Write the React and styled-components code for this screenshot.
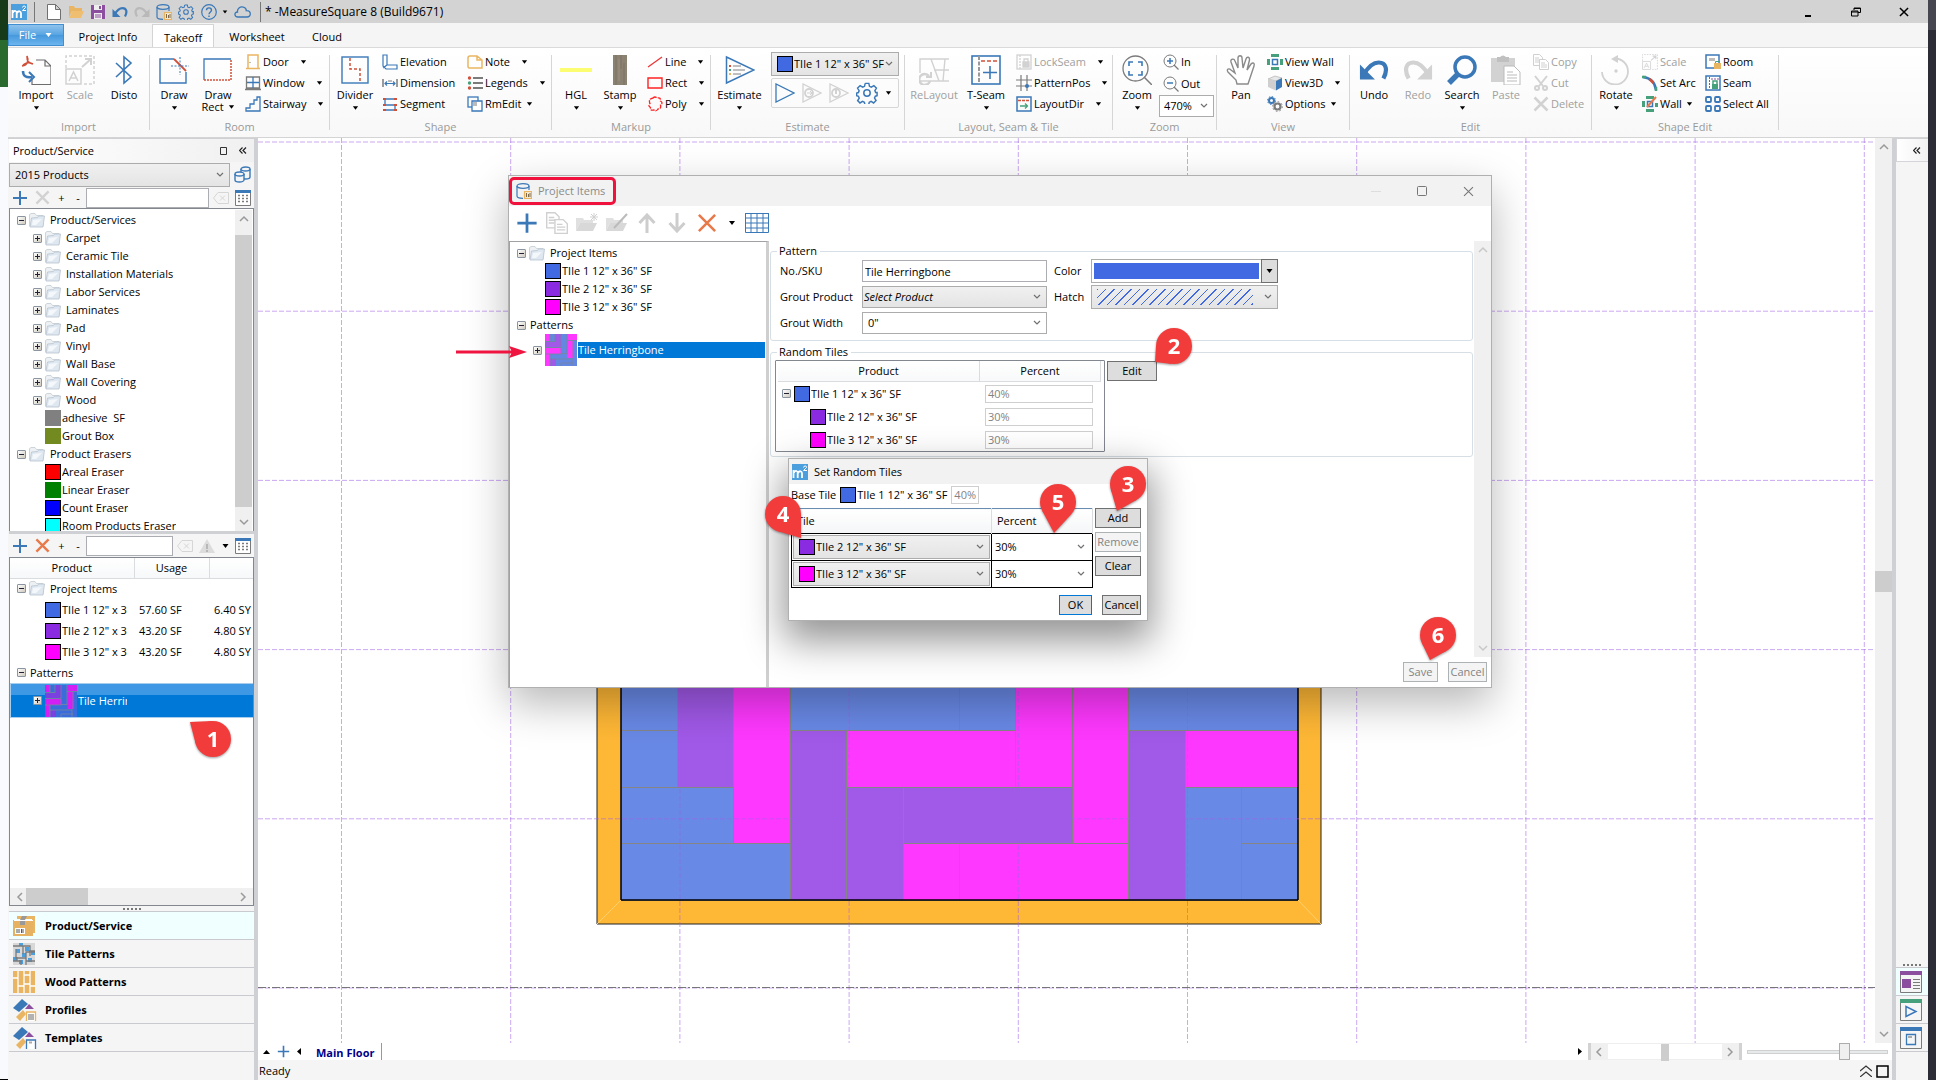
import React from 'react';
import styled, { createGlobalStyle, css } from 'styled-components';

const GlobalStyle = createGlobalStyle`
  * {
    box-sizing: border-box;
  }

  body {
    margin: 0;
    background-color: #f8fafd;
    color: #000;
    font-family: 'Open Sans', 'Noto Sans', sans-serif;
    font-size: 11px;
    line-height: 16px;
  }

  button, input, select {
    margin: 0;
    padding: 0;
    border: none;
    border-radius: 0;
    background: none;
    color: inherit;
    font: inherit;
  }

  select {
    appearance: none;
    min-width: 0;
    flex: 1;
    outline: none;
  }

  ul {
    margin: 0;
    padding: 0;
    list-style: none;
  }

  svg {
    display: block;
    flex: none;
  }
`

const blue = '#3a78b8';
const sky = '#4a9fdc';
const red = '#d0503a';
const orange = '#eab562';
const green = '#46a07c';
const purple = '#8c4fa0';
const gray = '#7b7b7b';
const pale = '#d2d2d2';

/* ---------- icons ---------- */

function Icon({ w = 16, h = w, box, stroke = 'none', sw = 1, children }) {
  return (
    <svg width={w} height={h} viewBox={box || `0 0 ${w} ${h}`} fill='none' stroke={stroke} strokeWidth={sw} aria-hidden='true'>
      {children}
    </svg>
  )
}

const Logo = () => (
  <Icon>
    <rect width='16' height='16' fill={sky} />
    <path d='M1.500 14V6M2 8.500q1-2 2.500-1.500t1.200 2V14M6 9q1-2 2.500-1.700T10 9.300V14' stroke='#fff' strokeWidth='1.800' />
    <path d='M11.500 3.500q.2-1.500 1.700-1.500t1.300 1.500L11.500 6.500h3.500' stroke='#fff' strokeWidth='1' />
  </Icon>
)

const Caret = ({ color = '#000', w = 7 }) => (
  <Icon w={w} h={4} box='0 0 8 4'><path d='M1 0h6L4 4z' fill={color} /></Icon>
)

const Chevron = ({ color = '#707070' }) => (
  <Icon w={8} h={6}><path d='M1 1l3 3 3-3' stroke={color} strokeWidth='1.200' /></Icon>
)

const arrowPaths = {
  up: 'M2 8l4-4 4 4',
  down: 'M2 4l4 4 4-4',
  left: 'M8 2L4 6l4 4',
  right: 'M4 2l4 4-4 4',
};

const ScrollArrow = ({ dir, color = '#9a9a9a' }) => (
  <Icon w={12}><path d={arrowPaths[dir]} stroke={color} strokeWidth='1.500' /></Icon>
)

const Plus = ({ s = 16, color = blue }) => (
  <Icon w={s} box='0 0 16 16'><path d='M8 1v14M1 8h14' stroke={color} strokeWidth='2' /></Icon>
)

const Cross = ({ s = 16, color = '#e8794a', sw = 2.5 }) => (
  <Icon w={s} box='0 0 16 16'><path d='M1.500 1.500l13 13M14.500 1.500l-13 13' stroke={color} strokeWidth={sw} /></Icon>
)

const FileIcon = () => (
  <Icon w={14} h={16}><path d='M.5.500h8l5 5v10H.5zM8.500.500v5h5' fill='#fff' stroke='#707070' /></Icon>
)

const OpenIcon = () => (
  <Icon w={15} h={14}>
    <path d='M0 12V1h5l1 2h7v3H3z' fill={orange} />
    <path d='M3.500 6H15l-3 7H0z' fill='#efbe70' />
  </Icon>
)

const SaveIcon = () => (
  <Icon w={14} h={14}>
    <path d='M0 0h14v14H0z' fill={purple} />
    <path d='M3 0h8v5H3z' fill='#eee' />
    <path d='M8 1h2v3H8z' fill={purple} />
    <path d='M3 8h8v6H3z' fill='#eee' />
    <path d='M4 10h6M4 12h6' stroke={purple} />
  </Icon>
)

const UndoIcon = ({ s = 16, color = blue, flip }) => (
  <Icon w={s} box='0 0 32 32'>
    <g transform={flip ? 'matrix(-1 0 0 1 32 0)' : undefined}>
      <path d='M5 21C9 14 14 8 21 8c8 0 10 8 5 17' stroke={color} strokeWidth='4.500' />
      <path d='M1 10v16h16z' fill={color} />
    </g>
  </Icon>
)

const DatabaseIcon = () => (
  <Icon>
    <ellipse cx='7' cy='3' rx='6' ry='2.300' stroke={blue} strokeWidth='1.200' />
    <path d='M1 3v10c0 1.500 3 2.300 6 2.300M13 3v4' stroke={blue} strokeWidth='1.200' />
    <path d='M8.500 8.500h7v7h-7z' fill='#f3e6cf' stroke={orange} strokeWidth='1.200' />
    <path d='M10.500 14v-4M12.500 14v-3M14 14v-4' stroke='#7d6a4a' />
  </Icon>
)

const TwoDatabasesIcon = () => (
  <Icon w={17} h={17} stroke={blue} sw={1.4}>
    <path d='M7 3v8c0 1 2 2 4.500 2s4.500-1 4.500-2V3' fill='#f5f5f5' />
    <ellipse cx='11.500' cy='3' rx='4.500' ry='2' fill='#f5f5f5' />
    <path d='M1 8v6c0 1 2 2 4.500 2s4.500-1 4.500-2V8' fill='#f5f5f5' />
    <ellipse cx='5.500' cy='8' rx='4.500' ry='2' fill='#f5f5f5' />
  </Icon>
)

const GearIcon = ({ s = 16, color = blue }) => (
  <Icon w={s} box='0 0 24 24' stroke={color} sw={1.6}>
    <circle cx='12' cy='12' r='3.500' />
    <path d='M10 1.500h4l.7 3.200 2 .9 2.800-1.700 2.800 2.800-1.700 2.700.8 2h2.400M10 1.500l-.7 3.200-2 .9-2.800-1.700-2.800 2.800 1.700 2.800-.8 2-1.900.5v3l2 .6.800 2-1.700 2.700 2.600 2.600 2.700-1.700 2 .9.700 2.700h4l.7-2.700 2-.9 2.700 1.700 2.700-2.700-1.700-2.700.9-2 1.900-.5v-3.200' />
  </Icon>
)

const HelpIcon = () => (
  <Icon>
    <circle cx='8' cy='8' r='7.300' stroke={blue} strokeWidth='1.200' />
    <path d='M5.500 6.300c0-3.300 5-3.300 5 0C10.500 8 8 8 8 10.300M8 11.500v1.500' stroke={blue} strokeWidth='1.400' />
  </Icon>
)

const CloudIcon = () => (
  <Icon w={17} h={12} stroke={blue} sw={1.3}>
    <path d='M4 11C0 11 0 6 3.500 6 3 3 6 0 9.500 1.200c2 .6 2.800 2 2.800 3.500C17.500 4.500 17.500 11 13 11z' />
  </Icon>
)

const ImportIcon = () => (
  <Icon w={30}>
    <path d='M15 5h9l6 6v18.500H11V23M24 5v6h6' stroke='#6d6d6d' strokeWidth='1.200' />
    <path d='M1 11c6-1 7-6 5-10 0 5 1 7 6 8M2 10c3-3 6-3 10-1' stroke={red} strokeWidth='1.600' />
    <path d='M2 16c0 5 3 7 9 6' stroke={blue} strokeWidth='2.500' />
    <path d='M8 17l5 5-5 5' stroke={blue} strokeWidth='2' />
  </Icon>
)

const ScaleIcon = ({ s = 30 }) => (
  <Icon w={s} box='0 0 30 30' stroke={pale} sw={1.5}>
    <path d='M1 13V1h28v28H19' strokeDasharray='3 2' />
    <path d='M1 14h15v15H1zM4 26l4.500-9L13 26M6 23h5' />
    <path d='M17 12l9-8M20 4h6v6' strokeWidth='2' />
  </Icon>
)

const BluetoothIcon = () => (
  <Icon w={30} stroke={blue} sw={1.6}>
    <path d='M7 8l15 14-7 6V2l7 6L7 22' />
  </Icon>
)

const DrawIcon = () => (
  <Icon w={30}>
    <path d='M15 4H1v24h26V17' stroke={blue} strokeWidth='1.400' />
    <path d='M15 4l12 12' stroke={red} strokeWidth='1.800' />
    <path d='M21 2v18M12 11h18' stroke={blue} strokeDasharray='2 1.500' />
  </Icon>
)

const DrawRectIcon = () => (
  <Icon w={30}>
    <path d='M1 25V4h27' stroke={blue} strokeWidth='1.300' />
    <path d='M28 5v20H1' stroke={red} strokeWidth='1.500' strokeDasharray='2 1' />
  </Icon>
)

const DoorIcon = () => (
  <Icon>
    <path d='M3 14V1h10v13M1 14.500h14' stroke={orange} strokeWidth='1.500' />
    <path d='M5 8v1' stroke={gray} />
  </Icon>
)

const WindowIcon = () => (
  <Icon>
    <path d='M1.500 2h13v11h-13zM0 14.500h16' stroke={gray} strokeWidth='1.300' />
    <path d='M8 2v11M2 7.500h12' stroke={blue} strokeWidth='1.300' />
  </Icon>
)

const StairIcon = () => (
  <Icon><path d='M1 15v-3h4V8h4V4h3V1h3v14z' stroke={blue} strokeWidth='1.300' /></Icon>
)

const DividerIcon = () => (
  <Icon w={30}>
    <rect x='2' y='2' width='26' height='26' stroke={blue} strokeWidth='1.400' />
    <path d='M10 3v11h10v14' stroke={red} strokeWidth='1.500' strokeDasharray='3 2' />
  </Icon>
)

const ElevationIcon = () => (
  <Icon><path d='M1 1h4v10h10v4H4L1 12zM1 14l4-3' stroke={blue} strokeWidth='1.200' /></Icon>
)

const DimensionIcon = () => (
  <Icon>
    <path d='M1 4v8M15 4v8' stroke={gray} strokeWidth='1.500' />
    <path d='M3 8.500h10M5 6.500l-2 2 2 2M11 6.500l2 2-2 2' stroke={blue} strokeWidth='1.200' />
    <path d='M6 6h4' stroke={gray} />
  </Icon>
)

const SegmentIcon = () => (
  <Icon>
    <path d='M2 3h12M2 9h12M2 14h12M3 3v6M13 9v5' stroke={blue} strokeWidth='1.300' />
    <path d='M1 2h3v2H1zM12 2h3v2h-3zM1 8h3v2H1zM12 8h3v2h-3zM1 13h3v2H1zM12 13h3v2h-3z' fill={red} />
  </Icon>
)

const NoteIcon = () => (
  <Icon><path d='M1 13V4q0-2 2-2h7l5 4v8H2zM10 2v4h5' stroke={orange} strokeWidth='1.500' /></Icon>
)

const LegendsIcon = () => (
  <Icon>
    <circle cx='2.500' cy='3' r='1.700' fill={red} />
    <circle cx='2.500' cy='8' r='1.700' fill={green} />
    <circle cx='2.500' cy='13' r='1.700' fill={red} />
    <path d='M6 3h10M6 8h10M6 13h10' stroke={gray} strokeWidth='2' />
  </Icon>
)

const RmEditIcon = () => (
  <Icon stroke={blue} sw={1.3}>
    <rect x='1' y='1' width='10' height='10' />
    <path d='M5 5h10v10H5z' fill='#fff' />
    <path d='M6 6h4v4H6z' fill='#bbb' stroke='none' />
  </Icon>
)

const HighlightIcon = () => (
  <Icon w={32} h={30}><path d='M0 13h32v4H0z' fill='#fdfd72' /></Icon>
)

const StampIcon = () => (
  <Icon w={14} h={30}>
    <path d='M0 0h14v30H0z' fill='#8b8272' />
    <path d='M3 0v30M8 0v14M11 8v22' stroke='#7c7364' />
    <path d='M6 4v22' stroke='#9b9283' />
  </Icon>
)

const LineIcon = () => (
  <Icon><path d='M1 13L15 3' stroke='#e33' strokeWidth='1.200' /></Icon>
)

const RectIcon = () => (
  <Icon><path d='M1 3h14v10H1z' stroke='#f22' strokeWidth='1.400' /></Icon>
)

const PolyIcon = () => (
  <Icon>
    <path d='M6 2q2-2 4 0 4-1 3.500 3 3 2 0 4 1 4-2.500 4-2 3-4 1-4 1-3.500-2.500-3-2-.5-4Q1 3 6 2z' stroke='#f22' strokeWidth='1.300' strokeDasharray='4 1' />
  </Icon>
)

const EstimateIcon = () => (
  <Icon w={30}>
    <path d='M1.500 2v26L29 15z' stroke={blue} strokeWidth='1.500' />
    <path d='M8 11h8M8 15h12M8 19h8' stroke='#aaa' strokeWidth='1.500' />
    <path d='M4 10h2v2H4z' fill={red} />
    <path d='M4 14h2v2H4z' fill={green} />
    <path d='M4 18h2v2H4z' fill={orange} />
  </Icon>
)

const PlayIcon = ({ s = 20, color = blue, dot }) => (
  <Icon w={s} box='0 0 20 20'>
    <path d='M1 1v18l18-9z' stroke={color} strokeWidth='1.300' />
    {dot && <circle cx='7' cy='10' r='4' stroke={color} strokeWidth='1.800' />}
    {dot === 'arrow' && <path d='M5 10h4M8 8l2 2-2 2' stroke={color} />}
    {dot === 'power' && <path d='M7 6v5' stroke={color} strokeWidth='2' />}
  </Icon>
)

const ReLayoutIcon = () => (
  <Icon w={30} stroke={pale} sw={1.4}>
    <path d='M1 18V4h29M12 4l8 22h10M15 15h15M1 26h26M26 4l-2 22' />
    <path d='M10 21a5.500 5.500 0 1 0 1 5' strokeWidth='2.500' />
    <path d='M12 17v5H7' strokeWidth='2' />
  </Icon>
)

const TSeamIcon = () => (
  <Icon w={30}>
    <rect x='1' y='1' width='28' height='28' stroke={blue} strokeWidth='1.600' />
    <path d='M8 1v28' stroke='#999' strokeWidth='2' strokeDasharray='4 1.500' />
    <path d='M10 6h18' stroke={red} strokeWidth='1.600' strokeDasharray='4 2' />
    <path d='M19 11v13M12 17.500h14' stroke={blue} strokeWidth='1.600' />
  </Icon>
)

const LockSeamIcon = () => (
  <Icon stroke={pale} sw={1.3}>
    <rect x='1' y='1' width='14' height='14' />
    <path d='M4 1v14' strokeDasharray='2 1' />
    <path d='M7 8h6v5H7z' fill={pale} />
    <path d='M8 8V5h4v3' />
  </Icon>
)

const PatternPosIcon = () => (
  <Icon>
    <path d='M5 0v16M11 0v16M0 5h16M0 11h16' stroke={gray} strokeWidth='1.200' />
    <circle cx='11' cy='11' r='2' fill={blue} />
  </Icon>
)

const LayoutDirIcon = () => (
  <Icon>
    <rect x='1' y='1' width='14' height='14' stroke={blue} strokeWidth='1.500' />
    <path d='M2 4.500h12' stroke={red} strokeWidth='1.500' strokeDasharray='3 1' />
    <path d='M4 10h7M9 7.500l2.500 2.500L9 12.500' stroke={green} strokeWidth='1.300' />
  </Icon>
)

const ZoomIcon = () => (
  <Icon w={30}>
    <circle cx='13.500' cy='13.500' r='12.500' stroke={gray} strokeWidth='1.300' />
    <path d='M22 22l8 8' stroke={gray} strokeWidth='1.500' />
    <path d='M7 11V7h4M16 7h4v4M20 16v4h-4M11 20H7v-4' stroke={blue} strokeWidth='1.600' />
  </Icon>
)

const LensIcon = ({ plus }) => (
  <Icon>
    <circle cx='7' cy='7' r='6' stroke={gray} />
    <path d='M11 11l4.500 4.500' stroke={gray} strokeWidth='1.300' />
    <path d={plus ? 'M7 4v6M4 7h6' : 'M4 7h6'} stroke={blue} strokeWidth='1.500' />
  </Icon>
)

const HandIcon = () => (
  <Icon w={30}>
    <path
      d='M11 29l-1-4-8-8c-2-3 1-4 3-2l4 3L5 7c-1-3 3-4 4-1l3 7V3c0-3 4-3 4 0l1 10 3-9c1-3 4-2 3.500 1L21 15l4-6c2-2 4-1 3 2l-4 12-2 6z'
      fill='#fff' stroke='#8a8a8a' strokeWidth='1.400'
    />
  </Icon>
)

const ViewWallIcon = () => (
  <Icon>
    <path d='M4 0h8v3H4zM4 13h8v3H4zM0 5h3v6H0zM13 5h3v6h-3z' fill={green} />
    <rect x='5.500' y='5.500' width='5' height='5' stroke={blue} strokeWidth='1.500' />
  </Icon>
)

const CubeIcon = () => (
  <Icon>
    <path d='M1 4l7-3 7 2-6 3z' fill='#e8e8e8' stroke='#999' strokeWidth='.5' />
    <path d='M1 4l8 2v9.500L1 12z' fill='#cfcfcf' />
    <path d='M9 6l6-3v9l-6 3.500z' fill={blue} />
  </Icon>
)

const OptionsIcon = () => (
  <Icon>
    <circle cx='4.500' cy='4.500' r='2.500' stroke={blue} strokeWidth='2' />
    <circle cx='4.500' cy='4.500' r='4' stroke={blue} strokeDasharray='1.500 1.600' />
    <circle cx='10.500' cy='10.500' r='3' stroke={gray} strokeWidth='2.200' />
    <circle cx='10.500' cy='10.500' r='4.800' stroke={gray} strokeDasharray='1.700 2' />
  </Icon>
)

const SearchIcon = () => (
  <Icon w={30}>
    <circle cx='18' cy='12' r='10' stroke={blue} strokeWidth='3.500' />
    <path d='M11 19l-9 9' stroke={blue} strokeWidth='5.500' />
  </Icon>
)

const PasteIcon = () => (
  <Icon w={30}>
    <path d='M0 3h24v24H0z' fill={pale} />
    <path d='M6 2h3q3-3 6 0h3v5H6z' fill='#c0c0c0' />
    <path d='M13 11h10l6 6v13H13z' fill='#fff' stroke='#bbb' />
    <path d='M16 17h6M16 20h10M16 23h10M16 26h10' stroke='#bbb' />
  </Icon>
)

const CopyIcon = ({ s = 16 }) => (
  <Icon w={s} box='0 0 16 16' stroke='#d0d0d0'>
    <path d='M.5.500h6l3 3v8h-9zM2 4h4M2 6h5M2 8h4' />
    <path d='M6.500 5.500h6l3 3v7h-9z' fill='#fff' />
    <path d='M8 9h4M8 11h6M8 13h6' />
  </Icon>
)

const CutIcon = () => (
  <Icon stroke={pale} sw={2}>
    <path d='M2 1l8 10M14 1L6 11' />
    <circle cx='4' cy='13' r='2' />
    <circle cx='12' cy='13' r='2' />
  </Icon>
)

const RotateIcon = () => (
  <Icon w={30} stroke={pale} sw={1.8}>
    <path d='M14 3.500a13 13 0 1 1-13 13.500' />
    <path d='M17 0v8l-7-4z' fill={pale} stroke='none' />
    <circle cx='15' cy='16' r='1.700' fill={pale} stroke='none' />
  </Icon>
)

const SetArcIcon = () => (
  <Icon>
    <path d='M1 2c8 1 12 5 13 13' stroke={blue} strokeWidth='2.500' />
    <path d='M7.500 4l4 4' stroke={red} strokeWidth='2.500' />
    <path d='M0 2h4M14 12v4' stroke={green} strokeWidth='2.500' />
  </Icon>
)

const WallIcon = () => (
  <Icon>
    <path d='M4 0h8v3H4zM4 13h8v3H4zM0 5h3v6H0zM13 7h3v4h-3z' fill={green} />
    <rect x='5.500' y='5.500' width='5' height='5' stroke={blue} strokeWidth='1.500' />
    <path d='M5 11L14 1' stroke='#e8794a' strokeWidth='2' />
  </Icon>
)

const RoomIcon = () => (
  <Icon>
    <rect x='1' y='1' width='13' height='13' fill='#fff' stroke={blue} strokeWidth='1.500' />
    <path d='M4 4h6v3H4z' fill='#bbb' />
    <path d='M9 9h7v6H9z' fill={orange} />
    <path d='M10.500 9V7.500h4V9' stroke={green} />
  </Icon>
)

const SeamIcon = () => (
  <Icon>
    <rect x='1' y='1' width='14' height='14' fill='#fff' stroke={blue} strokeWidth='1.500' />
    <path d='M4.500 2v12M6 4h8' stroke={purple} strokeDasharray='2 1' />
    <path d='M7 9h6v5H7z' fill={green} />
    <path d='M8 9V6h4v3' stroke={green} strokeWidth='1.500' />
  </Icon>
)

const SelectAllIcon = () => (
  <Icon stroke={blue} sw={1.8}>
    <rect x='1' y='1' width='5' height='5' rx='1' />
    <rect x='10' y='1' width='5' height='5' rx='1' />
    <rect x='1' y='10' width='5' height='5' rx='1' />
    <rect x='10' y='10' width='5' height='5' rx='1' />
  </Icon>
)

const ClearIcon = () => (
  <Icon w={16} h={12} stroke='#d6d6d6'>
    <path d='M5 .5h10.500v11H5L.5 6zM7 3.500l5 5M12 3.500l-5 5' />
  </Icon>
)

const CalcIcon = () => (
  <Icon>
    <path d='M.5.500h15v15H.5z' fill='#fff' stroke={gray} />
    <path d='M0 1.500h16' stroke={blue} strokeWidth='3' />
    <path d='M3 5.500h11M3 8.500h11M3 11.500h11' stroke={gray} strokeWidth='1.500' strokeDasharray='2 2' />
  </Icon>
)

const WarningIcon = () => (
  <Icon w={16} h={14}>
    <path d='M8 0l8 14H0z' fill='#dcdcdc' />
    <path d='M8 5v5M8 11v2' stroke='#aaa' strokeWidth='1.500' />
  </Icon>
)

const FolderIcon = () => (
  <Icon w={16} h={15}>
    <path d='M.5 13V1.500L2 .5h4l1.500 2H14V13z' fill='#eef1f4' stroke='#c3cbd2' strokeWidth='.8' />
    <path d='M2.500 5l6-.5 1-1.500h6l-1.500 11H1z' fill='#dfe8f1' stroke='#b7c3cf' strokeWidth='.8' />
    <path d='M4 7l9-1-6 6H3z' fill='#f4f8fb' />
  </Icon>
)

const FolderAddIcon = ({ pen }) => (
  <Icon w={22} h={20}>
    <path d='M0 18V5h7l1 2h9v3H4z' fill='#e0e0e0' />
    <path d='M4 10h17l-4 8H0z' fill='#d8d8d8' />
    {pen ? <path d='M8 15l13-14' stroke='#bbb' strokeWidth='2' /> : <path d='M18 0v8M14 4h8M15 1l6 6M21 1l-6 6' stroke='#d0d0d0' />}
  </Icon>
)

const BigArrow = ({ down }) => (
  <Icon w={18} h={20}>
    <path d={down ? 'M9 0v18M1.500 10L9 18l7.500-8' : 'M9 20V2M1.500 10L9 2l7.500 8'} stroke='#cdcdcd' strokeWidth='3' />
  </Icon>
)

const GridIcon = () => (
  <Icon w={24} h={20}>
    <path d='M.5.500h23v19H.5zM.5 5h23M.5 10h23M.5 15h23M6 .5v19M12 .5v19M18 .5v19' stroke={blue} />
    <path d='M0 0h24v1H0z' fill={blue} />
  </Icon>
)

const BoxIcon = () => (
  <Icon w={22} h={20}>
    <path d='M4 0h18v17h-3V3H4z' fill={orange} />
    <path d='M0 4h20v16H0z' fill='#e6b160' />
    <path d='M9 0h5l-2 4v5H7V4z' fill='#999' />
    <path d='M1 4.500h19' stroke='#fff' />
    <path d='M2 12h10v6H2z' fill='#fff' />
    <path d='M4 13v4M6 13v4M8.500 13v4M10 13v4' stroke='#555' />
  </Icon>
)

const TilePatternIcon = () => (
  <Icon w={22}>
    <path d='M0 0h22v22H0z' fill='#d8d8d8' />
    <path d='M6 0h4v3H6zM12 4h4v4h-4zM3 6h4v4H3zM9 10h4v4H9zM18 8h4v4h-4zM0 14h4v4H0zM6 17h4v4H6zM15 15h4v4h-4z' fill={sky} />
    <path d='M0 3h10v8M10 3h7v10M3 6v9h10V9h9M0 18h8v4M13 14v8M4 14v4M16 8h6M13 18h9' stroke={gray} strokeWidth='1.300' />
  </Icon>
)

const WoodPatternIcon = () => (
  <Icon w={22}>
    <path d='M0 0h22v22H0z' fill={orange} />
    <path d='M5 0v22M11 0v22M17 0v22M0 7h5M5 15h6M11 4h6M11 13h6M17 15h5' stroke='#fff' strokeWidth='1.300' />
  </Icon>
)

const ProfilesIcon = ({ template }) => (
  <Icon w={24} h={22}>
    <path d='M0 9L9 0l6 5-9 8z' fill={blue} />
    <path d='M16 5l5 5h-9z' fill={purple} />
    <path d='M3 18l7-7 3 4-6 7z' fill={orange} />
    <path d='M13.500 22v-9h9v9' fill='#fff' stroke={template ? blue : orange} strokeWidth='1.300' />
    {template ? <path d='M16 15.500h3' stroke='#aaa' strokeWidth='2' /> : <path d='M16 15v6M18 15v6M20 15v6' stroke='#666' />}
  </Icon>
)

const PanelIcon = ({ color, children }) => (
  <Icon w={22}>
    <path d='M.5.500h21v21H.5z' fill='#f5f5f5' stroke={gray} />
    <path d='M0 0h22v4H0z' fill={color} />
    {children}
  </Icon>
)

const HerringboneIcon = ({ dim }) => (
  <Icon w={32}>
    <path d='M0 0h32v32H0z' fill={dim ? '#3b6cdc' : '#6487e2'} />
    <path d='M0 0h5v7H0zM0 14h16v6H0zM22 0h10v6H22zM22 6h6v18h-6zM0 20h5v12H0z' fill={dim ? '#d31ef4' : '#ff38ff'} />
    <path d='M0 8h10v5H0zM10 0h6v13h-6zM5 25h6v7H5z' fill={dim ? '#7a40e0' : '#a159e8'} />
    <path d='M5 0v8M10 0v8M16 0v20M0 7.500h10M0 13.500h16M0 20h16M22 0v20M22 6.500h10M28 6v18M5 20v12M11 25h16M16 19.500h6M27 24v8M16 32v-3h12M5 25h6' stroke='#76869c' strokeWidth='.8' />
  </Icon>
)

/* ---------- window frame ---------- */

const Page = styled.div`
  display: grid;
  grid-template-columns: 8px minmax(0, 1fr) 8px;
  height: 100vh;
`

const LeftEdge = styled.div`
  background: linear-gradient(#173a19 0 40px, #2a6a2e 40px 87px, #f8fafd 87px);
  border-bottom: 1px solid #000;
`

const RightEdge = styled.div`
  background: linear-gradient(#45464f 0 30px, #2b2c36 30px);
`

const AppWindow = styled.div`
  display: flex;
  flex-direction: column;
  min-width: 0;
  background-color: #f5f5f5;
`

const TitleBar = styled.header`
  display: flex;
  align-items: center;
  height: 23px;
  background-color: #d3d3d3;
`

const QuickButton = styled.button`
  display: flex;
  align-items: center;
  justify-content: center;
  width: ${({ $w }) => $w || 22}px;
  height: 22px;
`

const Separator = styled.span`
  width: 1px;
  height: 20px;
  margin: ${({ $m }) => $m || '0'};
  background-color: #777;
`

const Title = styled.h1`
  flex: 1;
  margin: 0;
  font-size: 12px;
  font-weight: 400;
`

const TabRow = styled.nav`
  display: flex;
  align-items: stretch;
  height: 24px;
  padding-top: 1px;
`

const FileTab = styled.button`
  display: flex;
  align-items: center;
  justify-content: center;
  gap: 8px;
  width: 56px;
  height: 22px;
  border: 1px solid #3f8fd2;
  background: linear-gradient(#8fc2ec, #57a4e2 50%, #4597dd 50%, #6cb5ee);
  color: #fff;
`

const Tab = styled.button`
  width: ${({ $w }) => $w}px;
  padding-top: 3px;

  ${({ $active }) => $active && css`
    border: 1px solid #d4d4d4;
    border-bottom: none;
    background-color: #fff;
  `}
`

const Ribbon = styled.div`
  display: flex;
  height: 91px;
  padding-top: 7px;
  border-top: 1px solid #dadada;
  border-bottom: 1px solid #d4d4d4;
  background: linear-gradient(#fff, #f8f8f8);
`

const Group = styled.section`
  display: flex;
  flex-direction: column;
  width: ${({ $w }) => $w}px;
  height: 75px;
  flex: none;
  border-right: 1px solid #d6d6d6;
`

const GroupBody = styled.div`
  display: flex;
  height: 64px;
  flex: none;
  padding-left: ${({ $pad }) => $pad || 0}px;
`

const GroupName = styled.div`
  color: #999;
  text-align: center;
`

const LargeButton = styled.button`
  display: flex;
  flex-direction: column;
  align-items: center;
  width: ${({ $w }) => $w || 44}px;
  flex: none;
  color: ${({ disabled }) => disabled ? '#a0a0a0' : '#000'};
  line-height: 12px;

  span {
    display: flex;
    align-items: center;
    gap: 4px;
    white-space: nowrap;
  }

  > svg:first-child {
    margin-bottom: 4px;
  }

  > span + svg {
    margin-top: 5px;
  }
`

const SmallColumn = styled.div`
  display: flex;
  flex-direction: column;
  align-items: flex-start;
  width: ${({ $w }) => $w ? `${$w}px` : 'auto'};
  margin-left: ${({ $ml }) => $ml || 0}px;
  flex: none;
`

const SmallButton = styled.button`
  display: flex;
  align-items: center;
  gap: 2px;
  height: 22px;
  margin-top: -4px;
  margin-bottom: 4px;
  color: ${({ disabled }) => disabled ? '#a0a0a0' : '#000'};
  white-space: nowrap;

  > span + svg {
    margin-left: ${({ $gap }) => $gap || 9}px;
  }
`

function Large({ icon, label, line2, menu, w, disabled }) {
  return (
    <LargeButton $w={w} disabled={disabled}>
      {icon}
      <span>{label}</span>
      {line2 ? <span>{line2} <Caret /></span> : menu && <Caret />}
    </LargeButton>
  )
}

function Small({ icon, label, menu, gap, disabled }) {
  return (
    <SmallButton disabled={disabled} $gap={gap}>
      {icon}
      <span>{label}</span>
      {menu && <Caret />}
    </SmallButton>
  )
}

function RibbonGroup({ name, w, pad, children }) {
  return (
    <Group $w={w} aria-label={name}>
      <GroupBody $pad={pad}>{children}</GroupBody>
      <GroupName>{name}</GroupName>
    </Group>
  )
}

/* ---------- shared controls ---------- */

const Combo = styled.div`
  display: flex;
  align-items: center;
  gap: 1px;
  width: ${({ $w }) => $w ? `${$w}px` : 'auto'};
  height: ${({ $h }) => $h || 22}px;
  padding: 0 5px 0 ${({ $pl }) => $pl || 5}px;
  border: 1px solid ${({ $plain }) => $plain ? 'transparent' : '#acacac'};
  background: ${({ $white }) => $white ? '#fff' : 'linear-gradient(#f0f0f0, #e4e4e4)'};

  select {
    font-style: ${({ $italic }) => $italic ? 'italic' : 'normal'};
  }
`

const Swatch = styled.span`
  width: 16px;
  height: 16px;
  flex: none;
  border: 1px solid ${({ $edge }) => $edge || '#000'};
  background-color: ${({ $color }) => $color};
`

const TextBox = styled.input`
  min-width: 0;
  height: ${({ $h }) => $h || 20}px;
  width: ${({ $w }) => $w ? `${$w}px` : 'auto'};
  flex: ${({ $grow }) => $grow ? 1 : 'none'};
  padding: 0 2px;
  border: 1px solid ${({ disabled }) => disabled ? '#cfcfd0' : '#abadb3'};
  background-color: #fff;
  color: ${({ disabled }) => disabled ? '#838383' : '#000'};
`

const PushButton = styled.button`
  width: ${({ $w }) => $w}px;
  height: 20px;
  border: 1px solid ${({ $primary, disabled }) => $primary ? '#0078d7' : disabled ? '#adb2b5' : '#707070'};
  background-color: ${({ disabled }) => disabled ? '#f4f4f4' : '#ddd'};
  color: ${({ disabled }) => disabled ? '#838383' : '#000'};
  line-height: 16px;
`

const ToolButton = styled.button`
  display: flex;
  align-items: center;
  justify-content: center;
  width: ${({ $w }) => $w || 22}px;
  flex: none;
`

const ExpandBox = styled.button`
  display: flex;
  align-items: center;
  justify-content: center;
  width: 9px;
  height: 9px;
  flex: none;
  margin-right: 3px;
  border: 1px solid #8a95a0;
  border-radius: 1px;
  background: linear-gradient(135deg, #fff, #cfcabf);

  &::before {
    content: '';
    width: 5px;
    height: 5px;
    background:
      linear-gradient(#223, #223) center / 5px 1px no-repeat,
      linear-gradient(#223, #223) center / ${({ $open }) => $open ? '0 0' : '1px 5px'} no-repeat;
  }
`

const TreeRow = styled.div`
  display: flex;
  align-items: center;
  height: ${({ $h }) => $h || 18}px;
  padding-left: ${({ $level, $leaf }) => 7 + $level * 16 + ($leaf ? 12 : 0)}px;
  white-space: pre;
  overflow: hidden;
`

const ItemText = styled.span`
  flex: ${({ $fill }) => $fill ? '1' : '0 1 auto'};
  min-width: 0;
  margin-left: ${({ $folder }) => $folder ? 5 : 1}px;
  background-color: ${({ $selected }) => $selected ? '#0078d7' : 'transparent'};
  color: ${({ $light, $selected }) => $light || $selected ? '#fff' : '#000'};
  overflow: hidden;
`

function TreeItem({ label, level = 0, open, folder, color, edge }) {
  const leaf = Boolean(color);
  return (
    <TreeRow $level={level} $leaf={leaf}>
      {!leaf && <ExpandBox $open={open} aria-label={open ? 'Collapse' : 'Expand'} />}
      {folder && <FolderIcon />}
      {leaf && <Swatch $color={color} $edge={edge} />}
      <ItemText $folder={folder}>{label}</ItemText>
    </TreeRow>
  )
}

const ScrollBar = styled.div`
  display: flex;
  flex-direction: ${({ $row }) => $row ? 'row' : 'column'};
  align-items: center;
  justify-content: space-between;
  ${({ $row }) => $row ? 'height' : 'width'}: 17px;
  flex: none;
  padding: ${({ $row }) => $row ? '0 4px' : '3px 0'};
  background-color: #f0f0f0;
`

const Thumb = styled.span`
  width: ${({ $w }) => $w || 17}px;
  height: ${({ $h }) => $h || 17}px;
  flex: none;
  background-color: #cdcdcd;
`

const Spacer = styled.span`
  flex: ${({ $grow }) => $grow || 1};
`

/* ---------- left panel ---------- */

const Main = styled.div`
  display: flex;
  flex: 1;
  min-height: 0;
`

const SidePanel = styled.aside`
  position: relative;
  display: flex;
  flex-direction: column;
  width: 250px;
  flex: none;
  padding-left: 1px;
  border-right: 4px solid #cfd0d4;
  border-top: 1px solid #cfd0d4;
`

const PanelHeader = styled.div`
  display: flex;
  align-items: center;
  height: 23px;
  padding: 0 2px 0 4px;
  background: linear-gradient(90deg, #fff, #f0f0f0);

  h2 {
    flex: 1;
    margin: 0;
    font-size: 11px;
    font-weight: 400;
  }
`

const Chevrons = () => (
  <Icon w={8} h={7}><path d='M3.500.500l-3 3 3 3M7 .5l-3 3 3 3' stroke='#222' strokeWidth='1.200' /></Icon>
)

const ComboRow = styled.div`
  display: flex;
  align-items: center;
  gap: 2px;
  height: 25px;
  padding-right: 2px;

  > div {
    flex: 1;
  }
`

const ToolRow = styled.div`
  display: flex;
  align-items: center;
  height: 21px;
  padding-right: 1px;
`

const TreeBox = styled.div`
  display: flex;
  height: 323px;
  flex: none;
  padding: 1px 1px 0 0;
  border: 1px solid #828790;
  border-bottom: none;
  background-color: #fff;
  overflow: hidden;

  ul {
    flex: 1;
    padding-top: 1px;
    overflow: hidden;
  }
`

const Rule = styled.div`
  height: 3px;
  margin-bottom: 1px;
  background-color: #cfd0d4;
`

const UsageBox = styled.div`
  display: flex;
  flex-direction: column;
  flex: 1;
  min-height: 0;
  margin-top: 1px;
  border: 1px solid #828790;
  background-color: #fff;
  overflow: hidden;
`

const UsageTable = styled.table`
  width: 310px;
  border-collapse: collapse;
  table-layout: fixed;

  th {
    height: 20px;
    padding: 0;
    border-right: 1px solid #dadde0;
    border-bottom: 1px solid #dadde0;
    background: linear-gradient(#fff, #f6f8f9);
    font-weight: 400;
  }

  td {
    height: 21px;
    padding: 0 0 0 5px;
    white-space: nowrap;
  }

  td:first-child {
    padding: 0 7px 0 0;
  }
`

const UsageRow = styled.tr`
  ${({ $selected }) => $selected && css`
    background: linear-gradient(#3f98e3 0 12px, #0078d7 12px);
    outline: 1px solid #a9cdec;
    outline-offset: -1px;
    color: #fff;
  `}
`

const Grip = styled.div`
  display: flex;
  align-items: center;
  justify-content: center;
  gap: 2px;
  height: 5px;

  i {
    width: 2px;
    height: 2px;
    background-color: #777;
  }
`

const NavList = styled.ul`
  border-top: 1px solid #c8cad0;
`

const NavItem = styled.li`
  height: 28px;
  border-bottom: 1px solid #c8cad0;
  background-color: ${({ $active }) => $active ? '#f0ffff' : '#f5f5f5'};

  button {
    display: grid;
    grid-template-columns: 32px auto;
    align-items: center;
    width: 100%;
    height: 27px;
    padding-left: 4px;
    font-weight: 700;
    text-align: left;
  }
`

const BottomPad = styled.div`
  height: 28px;
  flex: none;
`

const folders = ['Carpet', 'Ceramic Tile', 'Installation Materials', 'Labor Services', 'Laminates', 'Pad', 'Vinyl', 'Wall Base', 'Wall Covering', 'Wood'];

const products = [
  { label: 'adhesive  SF', color: '#808080', edge: '#808080' },
  { label: 'Grout Box', color: '#728a20', edge: '#728a20' },
];

const erasers = [
  { label: 'Areal Eraser', color: '#f00' },
  { label: 'Linear Eraser', color: '#008000', edge: '#008000' },
  { label: 'Count Eraser', color: '#00f' },
  { label: 'Room Products Eraser', color: '#0ff' },
];

const tiles = [
  { name: 'TIle 1 12" x 36" SF', color: '#4169e1', usage: '57.60 SF', alt: '6.40 SY', percent: '40%' },
  { name: 'TIle 2 12" x 36" SF', color: '#8a2be2', usage: '43.20 SF', alt: '4.80 SY', percent: '30%' },
  { name: 'TIle 3 12" x 36" SF', color: '#ff00ff', usage: '43.20 SF', alt: '4.80 SY', percent: '30%' },
];

const navItems = [
  { label: 'Product/Service', icon: <BoxIcon />, active: true },
  { label: 'Tile Patterns', icon: <TilePatternIcon /> },
  { label: 'Wood Patterns', icon: <WoodPatternIcon /> },
  { label: 'Profiles', icon: <ProfilesIcon /> },
  { label: 'Templates', icon: <ProfilesIcon template /> },
];

function Dots() {
  return <Grip><i /><i /><i /><i /><i /></Grip>
}

/* numbered call-out, its point drawn from the circle's centre towards (dx, dy) */
const BadgeSvg = styled.svg`
  position: absolute;
  left: ${({ $x }) => $x - 38}px;
  top: ${({ $y }) => $y - 38}px;
  z-index: 5;
  overflow: visible;
  filter: drop-shadow(0 1px 1px rgba(0, 0, 0, 0.4));
  pointer-events: none;

  text {
    fill: #fff;
    font: 700 22px 'Open Sans', 'Noto Sans', sans-serif;
    text-anchor: middle;
  }
`

function Badge({ n, x, y, dx, dy }) {
  const r = 18;
  const angle = Math.atan2(dy, dx);
  const spread = Math.acos(r / Math.hypot(dx, dy));
  const point = (a) => `${r * Math.cos(a)},${r * Math.sin(a)}`;
  return (
    <BadgeSvg $x={x} $y={y} width='76' height='76' viewBox='-38 -38 76 76'>
      <circle r={r} fill='#f23c3c' />
      <polygon points={`${point(angle - spread)} ${dx},${dy} ${point(angle + spread)}`} fill='#f23c3c' />
      <text y='8'>{n}</text>
    </BadgeSvg>
  )
}

function ProductPanel() {
  return (
    <SidePanel>
      <PanelHeader>
        <h2>Product/Service</h2>
        <ToolButton aria-label='Float'><Icon w={7} h={8}><path d='M.5.500h6v7h-6z' stroke='#333' /></Icon></ToolButton>
        <ToolButton $w={18} aria-label='Collapse panel'><Chevrons /></ToolButton>
      </PanelHeader>
      <ComboRow>
        <Combo $h={24}>
          <select aria-label='Product list'><option>2015 Products</option></select>
          <Chevron />
        </Combo>
        <ToolButton $w={20} aria-label='Databases'><TwoDatabasesIcon /></ToolButton>
      </ComboRow>
      <ToolRow>
        <ToolButton aria-label='Add'><Plus s={16} /></ToolButton>
        <ToolButton aria-label='Delete' disabled><Cross s={15} color={pale} /></ToolButton>
        <ToolButton $w={17}>+</ToolButton>
        <ToolButton $w={16}>-</ToolButton>
        <TextBox $grow aria-label='Find product' />
        <ToolButton $w={24} aria-label='Clear'><ClearIcon /></ToolButton>
        <ToolButton $w={20} aria-label='Columns'><CalcIcon /></ToolButton>
      </ToolRow>
      <TreeBox>
        <ul>
          <li><TreeItem label='Product/Services' open folder /></li>
          {folders.map((name) => <li key={name}><TreeItem label={name} level={1} folder /></li>)}
          {products.map((item) => <li key={item.label}><TreeItem level={1} {...item} /></li>)}
          <li><TreeItem label='Product Erasers' open folder /></li>
          {erasers.map((item) => <li key={item.label}><TreeItem level={1} {...item} /></li>)}
        </ul>
        <ScrollBar>
          <ScrollArrow dir='up' />
          <Thumb $h={272} />
          <ScrollArrow dir='down' />
        </ScrollBar>
      </TreeBox>
      <Rule />
      <ToolRow>
        <ToolButton aria-label='Add item'><Plus s={16} /></ToolButton>
        <ToolButton aria-label='Delete item'><Cross s={15} /></ToolButton>
        <ToolButton $w={17}>+</ToolButton>
        <ToolButton $w={16}>-</ToolButton>
        <TextBox $grow aria-label='Find item' />
        <ToolButton $w={24} aria-label='Clear'><ClearIcon /></ToolButton>
        <ToolButton $w={20} aria-label='Warnings'><WarningIcon /></ToolButton>
        <ToolButton $w={16} aria-label='More'><Caret w={9} /></ToolButton>
        <ToolButton $w={20} aria-label='Columns'><CalcIcon /></ToolButton>
      </ToolRow>
      <UsageBox>
        <UsageTable>
          <colgroup>
            <col width='124' />
            <col width='75' />
            <col />
          </colgroup>
          <thead>
            <tr><th>Product</th><th>Usage</th><th aria-label='Alternate usage' /></tr>
          </thead>
          <tbody>
            <UsageRow><td colSpan='3'><TreeItem label='Project Items' open folder /></td></UsageRow>
            {tiles.map((tile) => (
              <UsageRow key={tile.name}>
                <td><TreeItem label={tile.name} color={tile.color} level={1} /></td>
                <td>{tile.usage}</td>
                <td>{tile.alt}</td>
              </UsageRow>
            ))}
            <UsageRow><td colSpan='3'><TreeItem label='Patterns' open /></td></UsageRow>
            <UsageRow $selected>
              <td>
                <TreeRow $level={1} $h={35}>
                  <ExpandBox aria-label='Expand' />
                  <HerringboneIcon dim />
                  <ItemText $light>Tile Herringbone</ItemText>
                </TreeRow>
              </td>
              <td />
              <td />
            </UsageRow>
          </tbody>
        </UsageTable>
        <Spacer />
        <ScrollBar $row>
          <ScrollArrow dir='left' />
          <Thumb $w={62} />
          <Spacer />
          <ScrollArrow dir='right' />
        </ScrollBar>
      </UsageBox>
      <Dots />
      <NavList>
        {navItems.map(({ label, icon, active }) => (
          <NavItem key={label} $active={active}><button>{icon}{label}</button></NavItem>
        ))}
      </NavList>
      <BottomPad />
      <Badge n='1' x={205} y={600} dx={-23} dy={-17} />
    </SidePanel>
  )
}

/* ---------- drawing area ---------- */

const Workspace = styled.main`
  position: relative;
  display: flex;
  flex-direction: column;
  flex: 1;
  min-width: 0;
`

const CanvasRow = styled.div`
  display: flex;
  flex: 1;
  min-height: 0;
  background-color: #fff;
`

const Canvas = styled.div`
  flex: 1;
  min-width: 0;
  overflow: hidden;
`

const PITCH = 169.2;
const UNIT = 56.4;

// [column, row from the bottom, columns, rows, colour]
const floor = [
  [0, 3, 1, 4, 'b'], [1, 2, 1, 5, 'p'], [2, 1, 1, 6, 'm'], [3, 3, 3, 4, 'b'], [6, 3, 1, 4, 'b'],
  [7, 2, 1, 5, 'm'], [8, 1, 1, 6, 'm'], [9, 3, 3, 4, 'b'],
  [0, 2, 1, 1, 'b'], [3, 0, 1, 3, 'p'], [4, 2, 3, 1, 'm'], [9, 0, 1, 3, 'p'], [10, 2, 2, 1, 'm'],
  [0, 1, 2, 1, 'b'], [4, 0, 1, 2, 'p'], [5, 1, 3, 1, 'p'], [10, 0, 1, 2, 'b'], [11, 1, 1, 1, 'b'],
  [0, 0, 3, 1, 'b'], [5, 0, 1, 1, 'm'], [6, 0, 3, 1, 'm'], [11, 0, 1, 1, 'b'],
];

const floorColors = { b: '#6989e6', p: '#a159e8', m: '#ff38ff' };

function Drawing() {
  const lines = [...Array(10).keys()];
  const left = 363;
  const bottom = 762;
  return (
    <svg width='100%' height='100%'>
      <path d='M339 180h724v606H339z' fill='#ffb836' stroke='#222' />
      <g stroke='#858585' shapeRendering='crispEdges'>
        {floor.map(([c, r, w, h, color]) => (
          <rect
            key={`${c}-${r}`} x={left + c * UNIT} y={bottom - (r + h) * UNIT} width={w * UNIT} height={h * UNIT}
            fill={floorColors[color]}
          />
        ))}
      </g>
      <path d='M363 180v582h677V180' fill='none' stroke='#000' strokeWidth='1.500' />
      <path d='M339 786l24-24M1063 786l-23-24' stroke='#ffcf70' />
      <g stroke='#a060e8' strokeOpacity='0.55' strokeDasharray='5 2'>
        {lines.map((i) => <line key={i} x1={83.5 + i * PITCH} x2={83.5 + i * PITCH} y1='0' y2='100%' />)}
        {lines.slice(0, 6).map((i) => <line key={i} x1='0' x2='100%' y1={4 + i * PITCH} y2={4 + i * PITCH} />)}
      </g>
      <line x1='0' x2='100%' y1='849.500' y2='849.500' stroke='#777' strokeDasharray='8 2 2 2' />
    </svg>
  )
}

const FloorBar = styled.div`
  display: flex;
  align-items: center;
  height: 17px;
  flex: none;
  background-color: #fff;
`

const FloorTab = styled.button`
  height: 17px;
  margin-left: 4px;
  padding: 3px 7px 0 6px;
  border-right: 1px solid #999;
  color: #00008b;
  font-weight: 700;
  line-height: 14px;
`

const HScroll = styled.div`
  display: flex;
  align-items: stretch;
  width: 154px;
  height: 17px;
  margin: 0 5px 0 4px;
  border: solid #d2d2d2;
  border-width: 0 3px;

  button {
    width: 17px;
    padding-left: 2px;
    background-color: #f0f0f0;
  }
`

const HTrack = styled.div`
  display: flex;
  justify-content: center;
  flex: 1;
  border: solid #eee;
  border-width: 1px 0;
`

const ZoomRange = styled.input`
  appearance: none;
  width: 141px;
  height: 17px;
  margin-right: 4px;

  &::-webkit-slider-runnable-track {
    height: 4px;
    border: 1px solid #d0d0d0;
    background-color: #e7eaea;
  }

  &::-webkit-slider-thumb {
    appearance: none;
    width: 11px;
    height: 17px;
    margin-top: -8px;
    border: 1px solid #acacac;
    background-color: #f0f0f0;
  }
`

const StatusBar = styled.footer`
  display: flex;
  align-items: center;
  justify-content: space-between;
  height: 20px;
  flex: none;
  padding: 2px 3px 0 1px;

  div {
    display: flex;
    gap: 4px;
  }
`

const RightPanel = styled.aside`
  display: flex;
  flex-direction: column;
  width: 36px;
  flex: none;
  border-left: 4px solid #cfd0d4;
  border-top: 1px solid #cfd0d4;
`

const RightHeader = styled.button`
  display: flex;
  align-items: center;
  justify-content: center;
  height: 23px;
  padding-left: 8px;
  border: 1px solid #d4d4da;
  border-width: 0 0 1px 1px;
  background: linear-gradient(90deg, #fff, #f2f2f2);
`

/* ---------- dialogs ---------- */

const Dialog = styled.section`
  position: absolute;
  left: ${({ $x }) => $x}px;
  top: ${({ $y }) => $y}px;
  display: flex;
  flex-direction: column;
  width: ${({ $w }) => $w}px;
  height: ${({ $h }) => $h}px;
  border: 1px solid #b0b0b0;
  background-color: #fff;
  box-shadow: ${({ $deep }) => $deep ? '0 16px 36px 4px rgba(0, 0, 0, 0.42)' : '0 16px 40px rgba(0, 0, 0, 0.28)'};
`

const DialogTitle = styled.div`
  display: flex;
  align-items: center;
  height: ${({ $h }) => $h}px;
  flex: none;
  padding-left: ${({ $pl }) => $pl}px;
  background-color: #f2f2f2;
  color: ${({ $dim }) => $dim ? '#8a8a8a' : '#000'};

  h2 {
    flex: 1;
    margin: 0 0 0 6px;
    font-size: 11px;
    font-weight: 400;
  }
`

const TitleMark = styled.span`
  position: absolute;
  left: 0;
  top: 1px;
  width: 107px;
  height: 28px;
  border: 3px solid #f0123c;
  border-radius: 5px;
`

const Pointer = styled.svg`
  position: absolute;
  left: -53px;
  top: 170px;
`

const DialogTools = styled.div`
  display: flex;
  align-items: center;
  height: 35px;
  flex: none;
  padding: 0 0 1px 3px;
`

const DialogBody = styled.div`
  display: flex;
  flex: 1;
  min-height: 0;
`

const DialogTree = styled.ul`
  width: 260px;
  flex: none;
  padding: 2px 1px 0 0;
  border: solid #a0a0a5;
  border-width: 1px 3px 0 1px;
  border-right-color: #cfcfcf;
`

const Pane = styled.div`
  display: flex;
  flex-direction: column;
  flex: 1;
  min-width: 0;
`

const PaneScroll = styled.div`
  display: flex;
  flex: 1;
  min-height: 0;
`

const Form = styled.div`
  flex: 1;
  min-width: 0;
  padding-top: 2px;
`

const FieldGroup = styled.fieldset`
  display: flex;
  height: ${({ $h }) => $h}px;
  min-width: 0;
  margin: 0 1px ${({ $mb }) => $mb || 0}px 1px;
  padding: 0 0 0 ${({ $pl }) => $pl}px;
  border: 1px solid #d5dfe5;
  border-radius: 3px;

  legend {
    margin-left: ${({ $pl }) => 6 - $pl}px;
    padding: 0 3px 0 2px;
  }
`

const FieldGrid = styled.div`
  display: grid;
  align-content: start;
  align-items: center;
  grid-template-columns: ${({ $cols }) => $cols};
  grid-auto-rows: ${({ $row }) => $row}px;
  row-gap: ${({ $gap }) => $gap}px;
  margin-right: 7px;
  padding-top: ${({ $pt }) => $pt || 0}px;
`

const ColorBox = styled.button`
  display: flex;
  height: 24px;
  padding: 3px 0 3px 2px;
  border: 1px solid #acacac;

  i {
    flex: 1;
    background-color: #4169e1;
  }

  span {
    display: flex;
    align-items: center;
    justify-content: center;
    width: 17px;
    margin: -4px -1px -4px 2px;
    border: 1px solid #707070;
    background-color: #ddd;
  }
`

const Hatch = styled.select`
  height: 16px;
  margin-right: 10px;
  background: repeating-linear-gradient(135deg, #4169e1 0 1px, transparent 1px 6px);
  color: transparent;
`

const RandomTable = styled.table`
  width: 330px;
  height: 92px;
  padding: 0 3px 0 2px;
  border: 1px solid #828790;
  border-radius: 1px;
  border-spacing: 0;
  table-layout: fixed;

  th {
    height: 21px;
    padding: 0;
    border-right: 1px solid #dadde0;
    border-bottom: 1px solid #dadde0;
    background: linear-gradient(#fff, #f8f9fa);
    font-weight: 400;
  }

  td {
    padding: 0 0 0 5px;
    height: 23px;
  }

  td:first-child {
    padding: 0;
  }

  input {
    display: block;
  }
`

const RandomItem = styled.div`
  display: flex;
  align-items: center;
  padding-left: ${({ $child }) => $child ? 32 : 4}px;
`

const EditSlot = styled.div`
  padding: 1px 0 0 2px;
`

const DialogFooter = styled.div`
  display: flex;
  align-items: center;
  justify-content: flex-end;
  gap: 10px;
  height: 30px;
  padding-right: 4px;
`

const BaseRow = styled.div`
  display: flex;
  align-items: center;
  height: 24px;
  padding: 0 0 3px 2px;

  label {
    margin-right: 4px;
  }

  span + span {
    margin: 0 4px 0 1px;
  }
`

const SetBody = styled.div`
  display: flex;
  gap: 2px;
  padding-left: 2px;
`

const SetTable = styled.table`
  width: 301px;
  height: 80px;
  border: 1px solid #688caf;
  border-collapse: collapse;
  table-layout: fixed;

  th {
    height: 25px;
    padding: 0 0 0 5px;
    border-right: 1px solid #dadde0;
    background: linear-gradient(#fff, #f4f6f7);
    font-weight: 400;
    text-align: left;
  }

  td {
    height: 27px;
    padding: 1px;
    border: 1px solid #000;
  }

  td:last-child {
    padding-left: 0;
  }
`

const ButtonColumn = styled.div`
  display: flex;
  flex-direction: column;
  gap: 4px;
`

const SetFooter = styled.div`
  display: flex;
  justify-content: flex-end;
  gap: 10px;
  margin-top: 7px;
  padding-right: 6px;
`

function SetRandomTiles() {
  return (
    <Dialog $x={279} $y={282} $w={360} $h={163} $deep aria-label='Set Random Tiles'>
      <DialogTitle $h={25} $pl={3}>
        <Logo />
        <h2>Set Random Tiles</h2>
      </DialogTitle>
      <BaseRow>
        <label htmlFor='base-percent'>Base Tile</label>
        <Swatch $color={tiles[0].color} />
        <span>{tiles[0].name}</span>
        <TextBox id='base-percent' $w={28} $h={18} disabled defaultValue='40%' />
      </BaseRow>
      <SetBody>
        <SetTable>
          <colgroup>
            <col width='200' />
            <col width='101' />
          </colgroup>
          <thead>
            <tr><th>Tile</th><th>Percent</th></tr>
          </thead>
          <tbody>
            {tiles.slice(1).map((tile) => (
              <tr key={tile.name}>
                <td>
                  <Combo $h={24}>
                    <Swatch $color={tile.color} />
                    <select aria-label='Tile'><option>{tile.name}</option></select>
                    <Chevron />
                  </Combo>
                </td>
                <td>
                  <Combo $h={24} $white $plain $pl={2}>
                    <select aria-label='Percent'><option>{tile.percent}</option></select>
                    <Chevron />
                  </Combo>
                </td>
              </tr>
            ))}
          </tbody>
        </SetTable>
        <ButtonColumn>
          <PushButton $w={46}>Add</PushButton>
          <PushButton $w={46} disabled>Remove</PushButton>
          <PushButton $w={46}>Clear</PushButton>
        </ButtonColumn>
      </SetBody>
      <SetFooter>
        <PushButton $w={33} $primary>OK</PushButton>
        <PushButton $w={39}>Cancel</PushButton>
      </SetFooter>
      <Badge n='3' x={339} y={25} dx={-11} dy={27} />
      <Badge n='4' x={-6} y={55} dx={18} dy={24} />
      <Badge n='5' x={269} y={43} dx={-4} dy={31} />
    </Dialog>
  )
}

function ProjectItems() {
  return (
    <Dialog $x={250} $y={37} $w={984} $h={513} aria-label='Project Items'>
      <DialogTitle $h={30} $pl={7} $dim>
        <DatabaseIcon />
        <h2>Project Items</h2>
        <ToolButton $w={46} aria-label='Minimize' disabled><Icon w={10}><path d='M0 5.500h10' stroke='#ddd' /></Icon></ToolButton>
        <ToolButton $w={46} aria-label='Maximize'><Icon w={10}><rect x='.5' y='.5' width='9' height='9' rx='1' stroke='#777' /></Icon></ToolButton>
        <ToolButton $w={46} aria-label='Close'><Cross s={11} color='#777' sw={1.6} /></ToolButton>
      </DialogTitle>
      <DialogTools>
        <ToolButton $w={30} aria-label='Add'><Plus s={22} /></ToolButton>
        <ToolButton $w={30} aria-label='Copy' disabled><CopyIcon s={22} /></ToolButton>
        <ToolButton $w={30} aria-label='New folder' disabled><FolderAddIcon /></ToolButton>
        <ToolButton $w={30} aria-label='Rename' disabled><FolderAddIcon pen /></ToolButton>
        <ToolButton $w={30} aria-label='Move up' disabled><BigArrow /></ToolButton>
        <ToolButton $w={30} aria-label='Move down' disabled><BigArrow down /></ToolButton>
        <ToolButton $w={30} aria-label='Delete'><Cross s={20} sw={2} /></ToolButton>
        <ToolButton $w={20} aria-label='Delete options'><Caret w={10} /></ToolButton>
        <ToolButton $w={30} aria-label='Grid'><GridIcon /></ToolButton>
      </DialogTools>
      <DialogBody>
        <DialogTree>
          <li><TreeItem label='Project Items' open folder /></li>
          {tiles.map((tile) => <li key={tile.name}><TreeItem label={tile.name} color={tile.color} level={1} /></li>)}
          <li><TreeItem label='Patterns' open /></li>
          <li>
            <TreeRow $level={1} $h={32}>
              <ExpandBox aria-label='Expand' />
              <HerringboneIcon />
              <ItemText $fill $selected>Tile Herringbone</ItemText>
            </TreeRow>
          </li>
        </DialogTree>
        <Pane>
          <PaneScroll>
            <Form>
              <FieldGroup $h={98} $mb={3} $pl={9}>
                <legend>Pattern</legend>
                <FieldGrid $cols='82px 185px' $row={22} $gap={4} $pt={1}>
                  <label htmlFor='sku'>No./SKU</label>
                  <TextBox id='sku' $h={22} defaultValue='Tile Herringbone' />
                  <label htmlFor='grout-product'>Grout Product</label>
                  <Combo $italic $pl={1}>
                    <select id='grout-product'><option>Select Product</option></select>
                    <Chevron />
                  </Combo>
                  <label htmlFor='grout-width'>Grout Width</label>
                  <Combo $white>
                    <select id='grout-width'><option>0"</option></select>
                    <Chevron />
                  </Combo>
                </FieldGrid>
                <FieldGrid $cols='37px 187px' $row={24} $gap={2}>
                  <label htmlFor='color'>Color</label>
                  <ColorBox id='color' aria-label='Royal blue'><i /><span><Caret w={9} /></span></ColorBox>
                  <label htmlFor='hatch'>Hatch</label>
                  <Combo $h={24}>
                    <Hatch id='hatch'><option>Diagonal</option></Hatch>
                    <Chevron />
                  </Combo>
                </FieldGrid>
              </FieldGroup>
              <FieldGroup $h={113} $pl={4}>
                <legend>Random Tiles</legend>
                <RandomTable>
                  <colgroup>
                    <col width='202' />
                    <col />
                  </colgroup>
                  <thead>
                    <tr><th>Product</th><th>Percent</th></tr>
                  </thead>
                  <tbody>
                    {tiles.map((tile, i) => (
                      <tr key={tile.name}>
                        <td>
                          <RandomItem $child={i > 0}>
                            {i === 0 && <ExpandBox $open aria-label='Collapse' />}
                            <Swatch $color={tile.color} />
                            <ItemText>{tile.name}</ItemText>
                          </RandomItem>
                        </td>
                        <td><TextBox $w={108} $h={18} disabled defaultValue={tile.percent} aria-label={`${tile.name} percent`} /></td>
                      </tr>
                    ))}
                  </tbody>
                </RandomTable>
                <EditSlot><PushButton $w={50}>Edit</PushButton></EditSlot>
              </FieldGroup>
            </Form>
            <ScrollBar>
              <ScrollArrow dir='up' color='#c8c8c8' />
              <ScrollArrow dir='down' color='#c8c8c8' />
            </ScrollBar>
          </PaneScroll>
          <DialogFooter>
            <PushButton $w={35} disabled>Save</PushButton>
            <PushButton $w={39} disabled>Cancel</PushButton>
          </DialogFooter>
        </Pane>
      </DialogBody>
      <TitleMark />
      <Pointer width='72' height='12' aria-hidden='true'>
        <path d='M0 6h58' stroke='#ef1540' strokeWidth='3' />
        <path d='M53 0l18 6-18 6 3-6z' fill='#ef1540' />
      </Pointer>
      <SetRandomTiles />
      <Badge n='2' x={665} y={170} dx={-19} dy={16} />
      <Badge n='6' x={929} y={459} dx={-8} dy={25} />
    </Dialog>
  )
}

/* ---------- ribbon content ---------- */

const EstimateStack = styled.div`
  display: flex;
  flex-direction: column;
  gap: 2px;
  width: 128px;
  margin: -3px 0 0 8px;
`

const PlayBar = styled.div`
  display: flex;
  align-items: center;
  height: 30px;
  padding-left: 3px;
  gap: 7px;
  border: 1px solid #d6d6d6;
  border-radius: 2px;
`

const SmallRow = styled.div`
  display: flex;
  padding-left: 4px;
`

const ZoomCombo = styled(Combo)`
  margin-top: -4px;
`

function RibbonBar() {
  return (
    <Ribbon>
      <RibbonGroup name='Import' w={142} pad={6}>
        <Large icon={<ImportIcon />} label='Import' menu />
        <Large icon={<ScaleIcon />} label='Scale' disabled />
        <Large icon={<BluetoothIcon />} label='Disto' />
      </RibbonGroup>
      <RibbonGroup name='Room' w={180} pad={2}>
        <Large icon={<DrawIcon />} label='Draw' menu />
        <Large icon={<DrawRectIcon />} label='Draw' line2='Rect' />
        <SmallColumn $ml={5}>
          <Small icon={<DoorIcon />} label='Door' menu />
          <Small icon={<WindowIcon />} label='Window' menu />
          <Small icon={<StairIcon />} label='Stairway' menu />
        </SmallColumn>
      </RibbonGroup>
      <RibbonGroup name='Shape' w={222} pad={3}>
        <Large icon={<DividerIcon />} label='Divider' menu />
        <SmallColumn $ml={5} $w={85}>
          <Small icon={<ElevationIcon />} label='Elevation' />
          <Small icon={<DimensionIcon />} label='Dimension' />
          <Small icon={<SegmentIcon />} label='Segment' />
        </SmallColumn>
        <SmallColumn>
          <Small icon={<NoteIcon />} label='Note' menu />
          <Small icon={<LegendsIcon />} label='Legends' menu />
          <Small icon={<RmEditIcon />} label='RmEdit' menu gap={2} />
        </SmallColumn>
      </RibbonGroup>
      <RibbonGroup name='Markup' w={159} pad={2}>
        <Large icon={<HighlightIcon />} label='HGL' menu />
        <Large icon={<StampIcon />} label='Stamp' menu />
        <SmallColumn $ml={5}>
          <Small icon={<LineIcon />} label='Line' menu />
          <Small icon={<RectIcon />} label='Rect' menu />
          <Small icon={<PolyIcon />} label='Poly' menu />
        </SmallColumn>
      </RibbonGroup>
      <RibbonGroup name='Estimate' w={194} pad={5}>
        <Large icon={<EstimateIcon />} label='Estimate' menu w={47} />
        <EstimateStack>
          <Combo $h={24}>
            <Swatch $color='#4169e1' />
            <select aria-label='Current product'><option>{'TIle 1 12" x 36" SF'}</option></select>
            <Chevron />
          </Combo>
          <PlayBar>
            <ToolButton $w={20} aria-label='Run'><PlayIcon /></ToolButton>
            <ToolButton $w={20} aria-label='Run next' disabled><PlayIcon color={pale} dot='arrow' /></ToolButton>
            <ToolButton $w={20} aria-label='Auto run' disabled><PlayIcon color={pale} dot='power' /></ToolButton>
            <ToolButton aria-label='Settings'><GearIcon s={22} /></ToolButton>
            <Caret />
          </PlayBar>
        </EstimateStack>
      </RibbonGroup>
      <RibbonGroup name='Layout, Seam & Tile' w={208} pad={2}>
        <Large icon={<ReLayoutIcon />} label='ReLayout' w={54} disabled />
        <Large icon={<TSeamIcon />} label='T-Seam' menu w={50} />
        <SmallColumn $ml={5}>
          <Small icon={<LockSeamIcon />} label='LockSeam' menu disabled />
          <Small icon={<PatternPosIcon />} label='PatternPos' menu />
          <Small icon={<LayoutDirIcon />} label='LayoutDir' menu />
        </SmallColumn>
      </RibbonGroup>
      <RibbonGroup name='Zoom' w={104} pad={2}>
        <Large icon={<ZoomIcon />} label='Zoom' menu />
        <SmallColumn>
          <SmallRow><Small icon={<LensIcon plus />} label='In' /></SmallRow>
          <SmallRow><Small icon={<LensIcon />} label='Out' /></SmallRow>
          <ZoomCombo $w={55} $h={22} $white $pl={4}>
            <select aria-label='Zoom level'><option>470%</option></select>
            <Chevron />
          </ZoomCombo>
        </SmallColumn>
      </RibbonGroup>
      <RibbonGroup name='View' w={133} pad={2}>
        <Large icon={<HandIcon />} label='Pan' />
        <SmallColumn $ml={4}>
          <Small icon={<ViewWallIcon />} label='View Wall' />
          <Small icon={<CubeIcon />} label='View3D' menu />
          <Small icon={<OptionsIcon />} label='Options' menu gap={2} />
        </SmallColumn>
      </RibbonGroup>
      <RibbonGroup name='Edit' w={242} pad={2}>
        <Large icon={<UndoIcon s={30} />} label='Undo' />
        <Large icon={<UndoIcon s={30} color={pale} flip />} label='Redo' disabled />
        <Large icon={<SearchIcon />} label='Search' menu />
        <Large icon={<PasteIcon />} label='Paste' disabled />
        <SmallColumn $ml={5}>
          <Small icon={<CopyIcon />} label='Copy' disabled />
          <Small icon={<CutIcon />} label='Cut' disabled />
          <Small icon={<Cross color={pale} />} label='Delete' disabled />
        </SmallColumn>
      </RibbonGroup>
      <RibbonGroup name='Shape Edit' w={187} pad={2}>
        <Large icon={<RotateIcon />} label='Rotate' menu />
        <SmallColumn $ml={4} $w={63}>
          <Small icon={<ScaleIcon s={16} />} label='Scale' disabled />
          <Small icon={<SetArcIcon />} label='Set Arc' />
          <Small icon={<WallIcon />} label='Wall' menu gap={2} />
        </SmallColumn>
        <SmallColumn>
          <Small icon={<RoomIcon />} label='Room' />
          <Small icon={<SeamIcon />} label='Seam' />
          <Small icon={<SelectAllIcon />} label='Select All' />
        </SmallColumn>
      </RibbonGroup>
    </Ribbon>
  )
}

export default function App() {
  return (
    <Page>
      <GlobalStyle />
      <LeftEdge />
      <AppWindow>
        <TitleBar>
          <QuickButton aria-label='MeasureSquare'><Logo /></QuickButton>
          <Separator $m='0 8px 0 4px' />
          <QuickButton aria-label='New'><FileIcon /></QuickButton>
          <QuickButton aria-label='Open'><OpenIcon /></QuickButton>
          <QuickButton aria-label='Save'><SaveIcon /></QuickButton>
          <QuickButton aria-label='Undo'><UndoIcon s={16} /></QuickButton>
          <QuickButton aria-label='Redo' disabled><UndoIcon s={16} color='#b9b9b9' flip /></QuickButton>
          <QuickButton aria-label='Project items'><DatabaseIcon /></QuickButton>
          <QuickButton aria-label='Settings'><GearIcon /></QuickButton>
          <QuickButton aria-label='Help' $w={24}><HelpIcon /></QuickButton>
          <QuickButton aria-label='Help menu' $w={7}><Caret w={6} /></QuickButton>
          <QuickButton aria-label='Cloud' $w={28}><CloudIcon /></QuickButton>
          <Separator $m='0 4px 0 4px' />
          <Title>* -MeasureSquare 8 (Build9671)</Title>
          <QuickButton $w={48} aria-label='Minimize'><Icon w={8} h={10}><path d='M1 8h6v2H1z' fill='#000' /></Icon></QuickButton>
          <QuickButton $w={48} aria-label='Restore'><Icon w={10}><path d='M3 3V1h6.500v4.500H7M.5 4h6.500v5H.5zM.5 5h6.500M3 1.500h6.500' stroke='#000' /></Icon></QuickButton>
          <QuickButton $w={48} aria-label='Close'><Cross s={10} color='#000' sw={2.4} /></QuickButton>
        </TitleBar>
        <TabRow>
          <FileTab>File <Caret color='#fff' w={9} /></FileTab>
          <Tab $w={88}>Project Info</Tab>
          <Tab $w={62} $active>Takeoff</Tab>
          <Tab $w={86}>Worksheet</Tab>
          <Tab $w={54}>Cloud</Tab>
        </TabRow>
        <RibbonBar />
        <Main>
          <ProductPanel />
          <Workspace>
            <CanvasRow>
              <Canvas><Drawing /></Canvas>
              <ScrollBar>
                <ScrollArrow dir='up' />
                <Spacer $grow={49} />
                <Thumb $h={21} />
                <Spacer $grow={51} />
                <ScrollArrow dir='down' />
              </ScrollBar>
            </CanvasRow>
            <FloorBar>
              <ToolButton $w={16} aria-label='Floors'><Icon w={7} h={4}><path d='M0 4h7L3.500 0z' fill='#000' /></Icon></ToolButton>
              <ToolButton $w={18} aria-label='Add floor'><Plus s={13} /></ToolButton>
              <ToolButton $w={14} aria-label='Previous'><Icon w={4} h={7}><path d='M4 0v7L0 3.500z' fill='#000' /></Icon></ToolButton>
              <FloorTab>Main Floor</FloorTab>
              <Spacer />
              <ToolButton $w={8} aria-label='Next'><Icon w={4} h={7}><path d='M0 0v7l4-3.500z' fill='#000' /></Icon></ToolButton>
              <HScroll>
                <button aria-label='Scroll left'><ScrollArrow dir='left' /></button>
                <HTrack><Thumb $w={8} /></HTrack>
                <button aria-label='Scroll right'><ScrollArrow dir='right' /></button>
              </HScroll>
              <ZoomRange type='range' aria-label='Zoom' min='0' max='100' defaultValue='71' />
            </FloorBar>
            <StatusBar>
              <span>Ready</span>
              <div>
                <Icon w={12}><path d='M0 6l6-5 6 5M0 12l6-5 6 5' stroke='#333' strokeWidth='1.200' /></Icon>
                <Icon w={13}><path d='M1 1h11v11H1z' stroke='#000' strokeWidth='1.500' /></Icon>
              </div>
            </StatusBar>
            <ProjectItems />
          </Workspace>
          <RightPanel>
            <RightHeader aria-label='Expand panel'><Chevrons /></RightHeader>
            <Spacer />
            <Dots />
            <NavList>
              <NavItem $active>
                <button aria-label='Details'>
                  <PanelIcon color={purple}>
                    <path d='M2 8h9v9H2z' fill={purple} />
                    <path d='M13 8.500h7M13 11.500h7M13 14.500h7M13 17.500h7' stroke={gray} />
                  </PanelIcon>
                </button>
              </NavItem>
              <NavItem>
                <button aria-label='Estimate'><PanelIcon color={green}><path d='M6 7.500v10l10-5z' stroke={blue} strokeWidth='1.500' /></PanelIcon></button>
              </NavItem>
              <NavItem>
                <button aria-label='Layers'>
                  <PanelIcon color={blue}>
                    <path d='M6.500 7.500h9v10h-9z' stroke={blue} strokeWidth='1.300' />
                    <path d='M8 10h4' stroke='#aaa' strokeWidth='2' />
                  </PanelIcon>
                </button>
              </NavItem>
            </NavList>
            <BottomPad />
          </RightPanel>
        </Main>
      </AppWindow>
      <RightEdge />
    </Page>
  )
}
